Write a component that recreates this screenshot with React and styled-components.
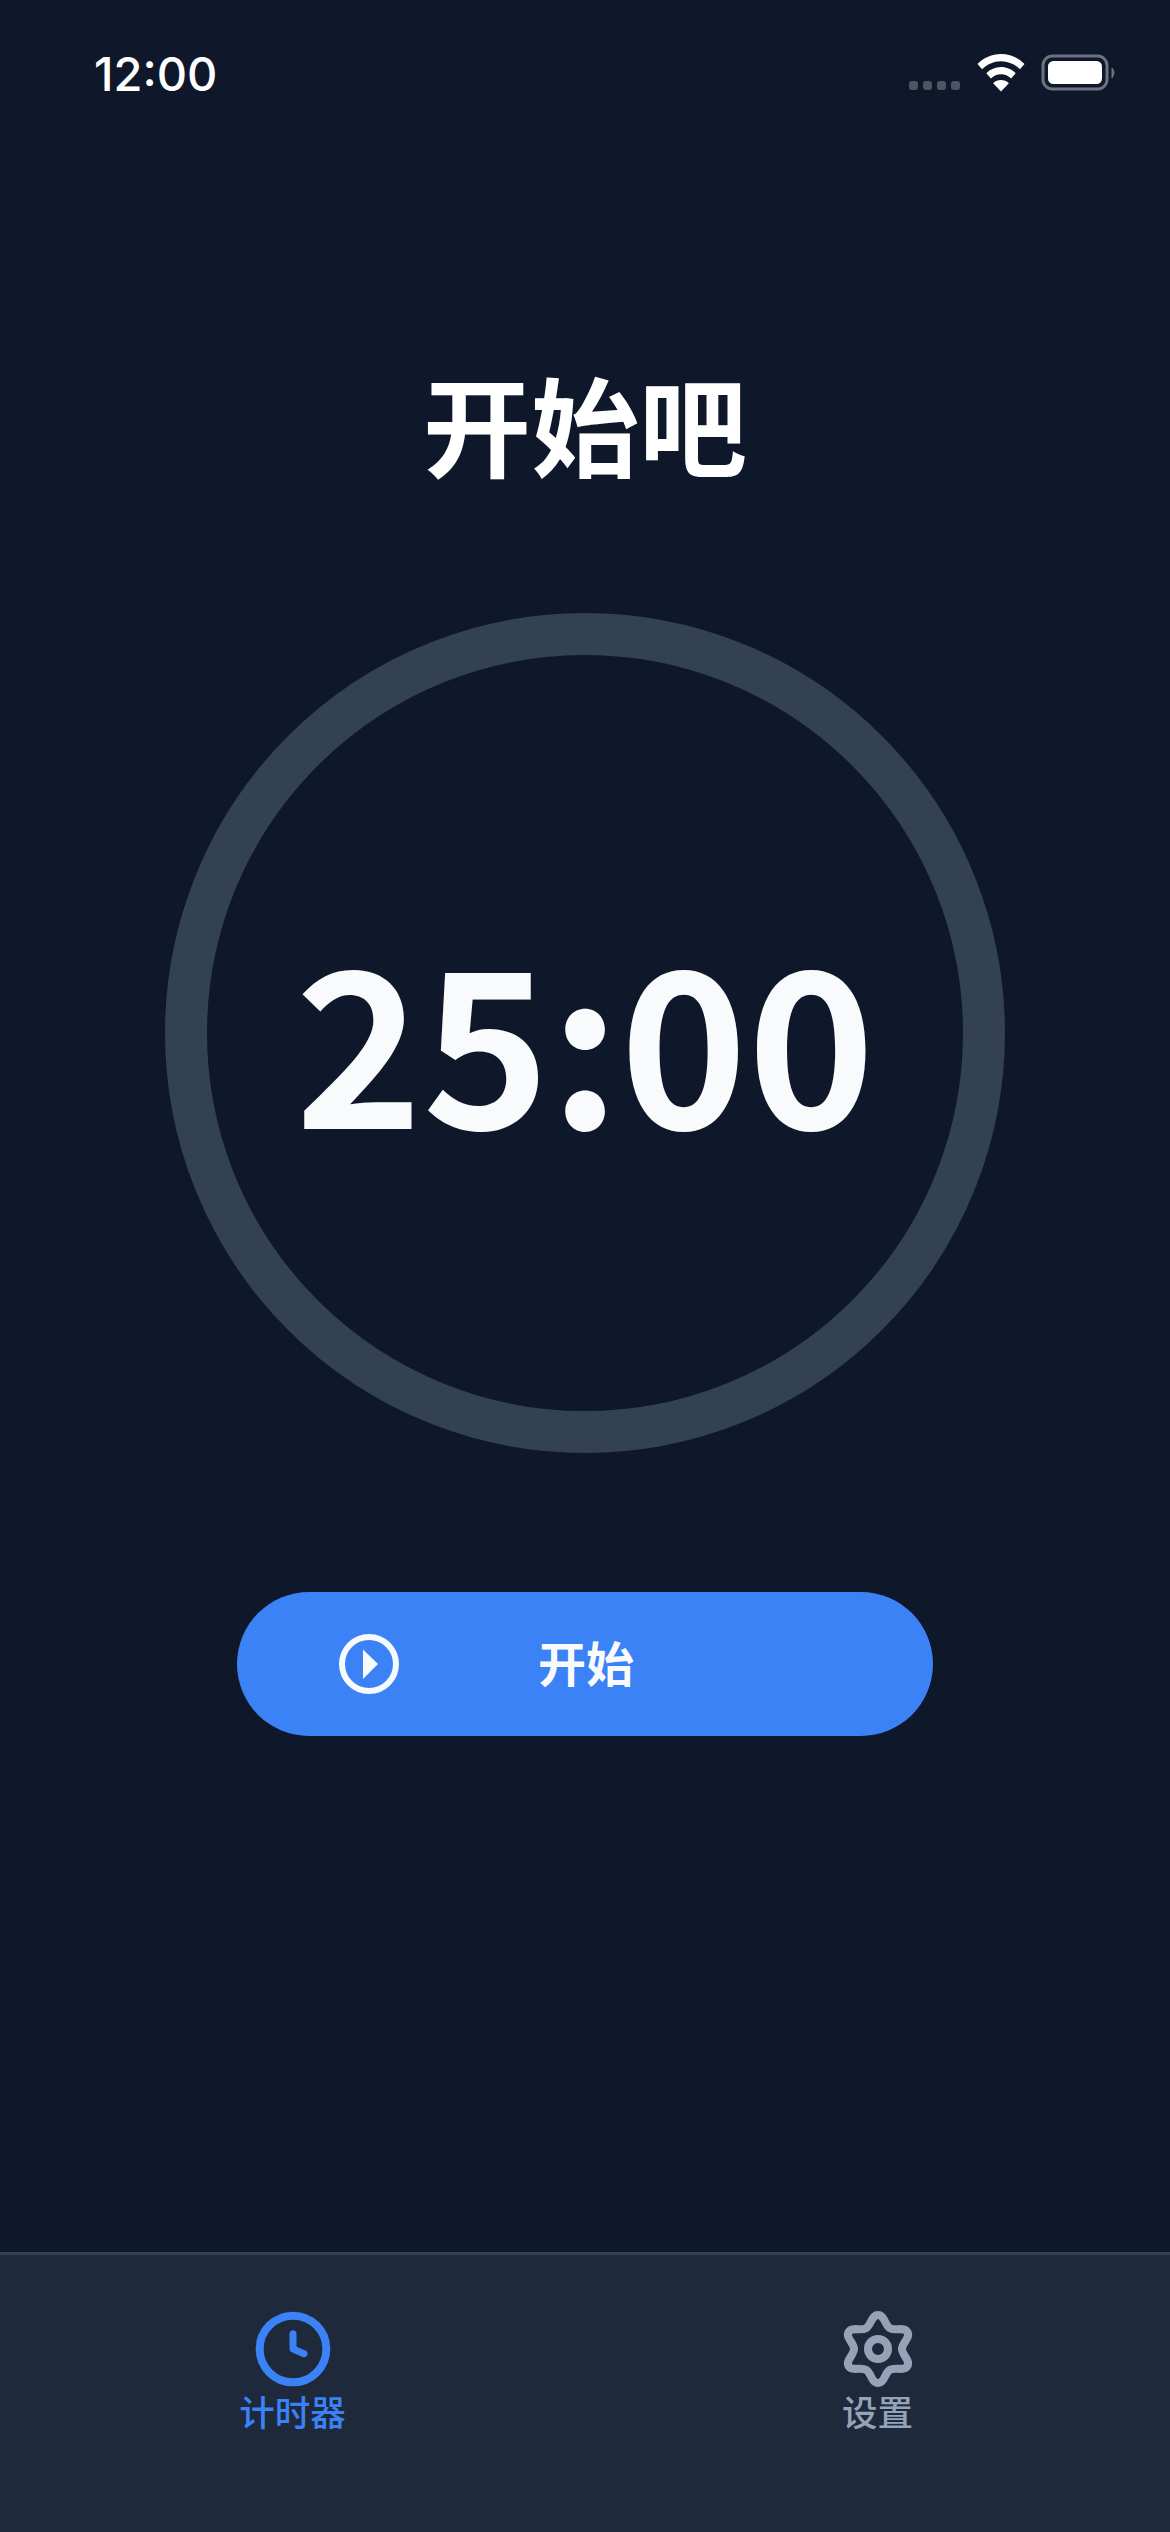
import React from "react";
import styled, { createGlobalStyle } from "styled-components";

const Global = createGlobalStyle`
  html, body { margin: 0; padding: 0; background: #0f172a; }
  * { box-sizing: border-box; }
`;
const CJK = `"Noto Sans CJK SC", "Noto Sans", sans-serif`;

const Page = styled.div`
  width: 1170px; height: 2532px; background: #0f172a; color: #f8fafc;
  display: flex; flex-direction: column; font-family: ${CJK}; overflow: hidden;
`;
const StatusBar = styled.div`
  height: 132px; padding: 42px 53px 0 94px; display: flex; justify-content: space-between; align-items: flex-start;
`;
const Time = styled.div`
  font-family: Inter, sans-serif; font-size: 47px; line-height: 64px; font-weight: 500; color: #fff; height: 64px;
`;
const StatusIcons = styled.div`
  display: flex; align-items: center; gap: 16px; margin-top: 12px; height: 38px;
`;
const Dots = styled.div`
  display: flex; gap: 5px; margin: 25px 1px 0 0;
`;
const Dot = styled.span`
  width: 9px; height: 9px; border-radius: 3px; background: #4b5563;
`;
const Main = styled.main`
  flex: 1; display: flex; flex-direction: column; align-items: center;
`;
const Title = styled.h1`
  margin: 212px 0 0; font-size: 108px; line-height: 156px; font-weight: 700; color: #fff; height: 156px;
`;
const Ring = styled.div`
  width: 840px; height: 840px; margin-top: 113px; border-radius: 50%; border: 42px solid #334155;
  display: flex; align-items: center; justify-content: center;
`;
const Digits = styled.div`
  font-size: 216px; line-height: 1; font-weight: 700; color: #f8fafc; margin-top: 4px;
`;
const StartButton = styled.button`
  width: 696px; height: 144px; margin-top: 139px; border: 0; border-radius: 72px; background: #3b82f6; color: #f8fafc;
  display: grid; grid-template-columns: 1fr auto 1fr; align-items: center; padding: 0;
  font-family: ${CJK}; font-size: 48px; font-weight: 700;
`;
const ButtonIcon = styled.svg`
  margin-left: 102px; width: 60px; height: 60px; display: block;
`;
const ButtonLabel = styled.span`
  line-height: 1; margin-top: -6px; margin-left: 2px;
`;
const NavBar = styled.nav`
  height: 280px; background: #1e293b; border-top: 3px solid #334155; display: grid; grid-template-columns: 1fr 1fr;
`;
const NavItem = styled.div`
  display: flex; flex-direction: column; align-items: center; padding-top: 54px;
  color: ${p => (p.$active ? "#3b82f6" : "#94a3b8")};
`;
const NavLabel = styled.span`
  font-size: 35.5px; line-height: 44px; margin-top: 0; font-weight: 500;
`;

const Wifi = () => (
  <svg width="48" height="38" viewBox="0 0 50 38" preserveAspectRatio="none" fill="#fff">
    <path d="M25 0C15.500 0 7 3.700 0.500 10l4.800 5.200C10.500 10.200 17.400 7.200 25 7.200s14.500 3 19.700 8l4.800-5.200C43 3.700 34.500 0 25 0z" />
    <path d="M25 13c-6 0-11.300 2.300-15.300 6.200l4.800 5.200c2.800-2.600 6.500-4.200 10.500-4.200s7.700 1.600 10.500 4.200l4.800-5.200C36.300 15.300 31 13 25 13z" />
    <path d="M25 26c-3.200 0-6 1.200-8.200 3.200L25 37.500l8.200-8.300C31 27.200 28.200 26 25 26z" />
  </svg>
);
const Battery = () => (
  <svg width="76" height="38" viewBox="0 0 76 38">
    <rect x="2" y="2" width="64" height="33" rx="9.500" fill="none" stroke="#6b7280" strokeWidth="3" />
    <rect x="7" y="7" width="54" height="23" rx="5.500" fill="#fff" />
    <path d="M71 14 q4 4 0 10z" fill="#6b7280" stroke="#6b7280" strokeWidth="1" />
  </svg>
);
const PlayIcon = () => (
  <ButtonIcon viewBox="0 0 60 60">
    <circle cx="30" cy="30" r="27" fill="none" stroke="#f8fafc" strokeWidth="6" />
    <path d="M24 15.500 L39 30 L24 45z" fill="#f8fafc" />
  </ButtonIcon>
);
const ClockIcon = () => (
  <svg width="80" height="80" viewBox="0 0 24 24" fill="none" stroke="currentColor" strokeWidth="2.400" strokeLinecap="round" strokeLinejoin="round">
    <circle cx="12" cy="12" r="10" />
    <polyline points="12 7.400 12 12 15.300 13.400" strokeWidth="2.100" />
  </svg>
);

// Six round lobes joined by S-curves: tangents at tip and valley are perpendicular to the radius.
const gearPath = (() => {
  const TIP = 34, VALLEY = 24, TIP_HANDLE = 6.5, VALLEY_HANDLE = 6;
  const at = (deg, r, h = 0) => {
    const a = (deg * Math.PI) / 180;
    const x = 40 + r * Math.sin(a) + h * Math.cos(a);
    const y = 40 - r * Math.cos(a) + h * Math.sin(a);
    return `${x.toFixed(2)} ${y.toFixed(2)}`;
  };
  let d = `M${at(0, TIP)}`;
  for (let k = 0; k < 6; k++) {
    const tip = k * 60, valley = tip + 30, next = tip + 60;
    d += `C${at(tip, TIP, TIP_HANDLE)} ${at(valley, VALLEY, -VALLEY_HANDLE)} ${at(valley, VALLEY)}`;
    d += `C${at(valley, VALLEY, VALLEY_HANDLE)} ${at(next, TIP, -TIP_HANDLE)} ${at(next, TIP)}`;
  }
  return `${d}Z`;
})();

const GearIcon = () => (
  <svg width="80" height="80" viewBox="0 0 80 80" fill="none" stroke="currentColor" strokeWidth="8" strokeLinejoin="round">
    <path d={gearPath} />
    <circle cx="40" cy="40" r="10" />
  </svg>
);

export default function App() {
  return (
    <Page>
      <Global />
      <StatusBar>
        <Time>12:00</Time>
        <StatusIcons>
          <Dots><Dot /><Dot /><Dot /><Dot /></Dots>
          <Wifi />
          <Battery />
        </StatusIcons>
      </StatusBar>
      <Main>
        <Title>开始吧</Title>
        <Ring><Digits>25:00</Digits></Ring>
        <StartButton>
          <PlayIcon />
          <ButtonLabel>开始</ButtonLabel>
        </StartButton>
      </Main>
      <NavBar>
        <NavItem $active><ClockIcon /><NavLabel>计时器</NavLabel></NavItem>
        <NavItem><GearIcon /><NavLabel>设置</NavLabel></NavItem>
      </NavBar>
    </Page>
  );
}
